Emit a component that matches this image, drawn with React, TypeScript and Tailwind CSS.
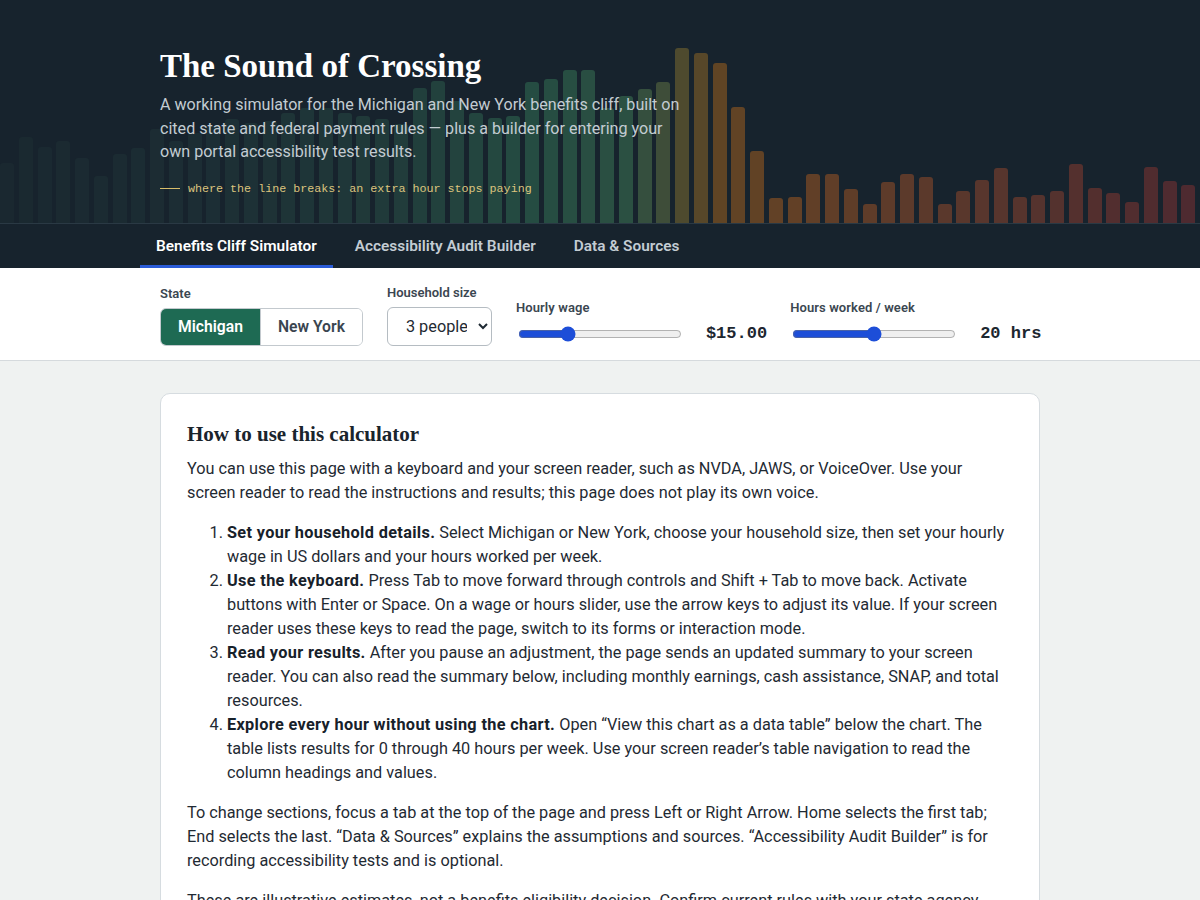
import { useState } from 'react'

// bar tops measured off the header art; bottom sits at y=222
const TOPS = [
  162, 136, 146, 140, 157, 175, 153, 147, 128, 140, 132, 125, 118, 122, 120, 112, 107, 107, 112, 115, 118, 123,
  87, 80, 100, 112, 117, 115, 81, 78, 69, 69, 107, 95, 88, 81, 47, 52, 62, 106, 150, 197, 196, 173, 173, 188, 203,
  181, 173, 176, 203, 190, 179, 167, 196, 194, 190, 163, 187, 192, 201, 166, 180, 184,
]

const KEYS: [number, number[]][] = [
  [0, [26, 40, 48]],
  [10, [28, 45, 52]],
  [20, [32, 58, 58]],
  [28, [37, 76, 66]],
  [33, [43, 80, 66]],
  [35, [62, 77, 57]],
  [36, [78, 74, 46]],
  [38, [96, 68, 36]],
  [42, [98, 64, 38]],
  [50, [90, 56, 44]],
  [63, [78, 42, 48]],
]

function barColor(i: number) {
  for (let k = 0; k < KEYS.length - 1; k++) {
    const [a, ca] = KEYS[k]
    const [b, cb] = KEYS[k + 1]
    if (i >= a && i <= b) {
      const t = (i - a) / (b - a)
      const c = ca.map((v, j) => Math.round(v + (cb[j] - v) * t))
      return `rgb(${c[0]}, ${c[1]}, ${c[2]})`
    }
  }
  return 'rgb(78, 42, 48)'
}

const TABS = ['Benefits Cliff Simulator', 'Accessibility Audit Builder', 'Data & Sources']

const sans = "font-['Roboto','Liberation_Sans',sans-serif]"
const serif = "font-['Liberation_Serif','Times_New_Roman',serif]"
const mono = "font-['Liberation_Mono','Courier_New',monospace]"
const lead = 'font-bold tracking-[0.34px] text-[#17212a]'

function HeaderArt() {
  return (
    <div aria-hidden="true" className="absolute inset-x-0 bottom-0 flex h-[180px] items-end">
      {TOPS.map((top, i) => (
        <div key={i} className="flex w-[18.75px] shrink-0 items-end">
          <div className="w-[14px] rounded-t-[3px]" style={{ height: 222 - top, backgroundColor: barColor(i) }} />
        </div>
      ))}
    </div>
  )
}

function Slider({
  label,
  value,
  min,
  max,
  step,
  onChange,
  display,
}: {
  label: string
  value: number
  min: number
  max: number
  step: number
  onChange: (v: number) => void
  display: string
}) {
  return (
    <div className="flex shrink-0 flex-col">
      <span className="mb-[6px] whitespace-nowrap text-[13px] font-semibold leading-4 tracking-[0.1px] text-[#3b4751]">
        {label}
      </span>
      <div className="flex h-6 items-center gap-6">
        <input
          type="range"
          min={min}
          max={max}
          step={step}
          value={value}
          onChange={(e) => onChange(Number(e.target.value))}
          aria-label={label}
          className="ml-[2px] w-[164px] shrink-0 accent-[#1d4ed8]"
        />
        <span className={`${mono} whitespace-nowrap text-[17px] font-bold text-[#1d2730]`}>{display}</span>
      </div>
    </div>
  )
}

export default function App() {
  const [tab, setTab] = useState(0)
  const [state, setState] = useState<'MI' | 'NY'>('MI')
  const [size, setSize] = useState('3')
  const [wage, setWage] = useState(15)
  const [hours, setHours] = useState(20)

  return (
    <div className={`${sans} min-h-screen bg-[#eff2f1] text-[#1f2a33]`}>
      <header className="relative overflow-hidden border-b border-[#2a3944] bg-[#17232d]">
        <HeaderArt />
        <div className="relative mx-auto w-[880px] pb-[25px] pt-[46px]">
          <h1 className={`${serif} text-[33px] font-semibold leading-10 text-white`}>The Sound of Crossing</h1>
          <p className="mt-[7px] max-w-[528px] text-[16.1px] leading-[23.5px] text-[#c3ccd2]">
            A working simulator for the Michigan and New York benefits cliff, built on cited state and federal payment
            rules — plus a builder for entering your own portal accessibility test results.
          </p>
          <p className={`${mono} mt-4 flex items-center text-[11.7px] leading-[18px] text-[#dcc47e]`}>
            <span className="mr-2 inline-block h-px w-5 bg-[#d8bd6a]" />
            where the line breaks: an extra hour stops paying
          </p>
        </div>
      </header>

      <nav className="bg-[#17232d]">
        <div role="tablist" className="mx-auto flex w-[880px]">
          <div className="-ml-5 flex gap-[6px]">
            {TABS.map((t, i) => (
              <button
                key={t}
                role="tab"
                aria-selected={tab === i}
                onClick={() => setTab(i)}
                className={`h-[44px] whitespace-nowrap border-b-[3px] px-4 pt-[5px] text-[15.4px] font-semibold ${
                  tab === i ? 'border-[#2a5bd7] text-white' : 'border-transparent text-[#c3ccd3]'
                }`}
              >
                {t}
              </button>
            ))}
          </div>
        </div>
      </nav>

      <section className="border-b border-[#d5dadd] bg-white">
        <div className="mx-auto flex w-[880px] items-end gap-6 pb-[14px] pt-[17px]">
          <div className="flex shrink-0 flex-col">
            <span className="mb-[6px] text-[13px] font-semibold leading-4 text-[#3b4751]">State</span>
            <div className="flex h-[38px] overflow-hidden rounded-md border border-[#c3c9ce]">
              <button
                onClick={() => setState('MI')}
                className={`whitespace-nowrap px-[17px] text-[15.7px] font-semibold ${
                  state === 'MI' ? 'bg-[#1e6a53] text-white' : 'bg-white text-[#3a4550]'
                }`}
              >
                Michigan
              </button>
              <button
                onClick={() => setState('NY')}
                className={`whitespace-nowrap border-l border-[#c3c9ce] px-[17px] text-[15.7px] font-semibold ${
                  state === 'NY' ? 'bg-[#1e6a53] text-white' : 'bg-white text-[#3a4550]'
                }`}
              >
                New York
              </button>
            </div>
          </div>

          <div className="flex shrink-0 flex-col">
            <span className="mb-[6px] whitespace-nowrap text-[13px] font-semibold leading-4 text-[#3b4751]">
              Household size
            </span>
            <select
              value={size}
              onChange={(e) => setSize(e.target.value)}
              className="h-[39px] w-[105px] rounded-md border border-[#b5bcc2] bg-white pl-[14px] pr-2 text-[16.3px] text-[#1f2a33]"
            >
              <option value="1">1 person</option>
              <option value="2">2 people</option>
              <option value="3">3 people</option>
              <option value="4">4 people</option>
              <option value="5">5 people</option>
            </select>
          </div>

          <Slider
            label="Hourly wage"
            value={wage}
            min={5}
            max={40}
            step={0.25}
            onChange={setWage}
            display={`$${wage.toFixed(2)}`}
          />
          <div className="-ml-px">
            <Slider
              label="Hours worked / week"
              value={hours}
              min={0}
              max={40}
              step={1}
              onChange={setHours}
              display={`${hours} hrs`}
            />
          </div>
        </div>
      </section>

      <main className="px-4 pb-10 pt-8">
        <article className="mx-auto w-[880px] rounded-[10px] border border-[#d6dce0] bg-white px-[26px] pb-6 pt-[26px] text-[16.3px] leading-6">
          <h2 className={`${serif} mb-[9px] text-[21px] font-semibold leading-7 text-[#1a242c]`}>
            How to use this calculator
          </h2>
          <p className="mb-4">
            You can use this page with a keyboard and your screen reader, such as NVDA, JAWS, or VoiceOver. Use your
            screen reader to read the instructions and results; this page does not play its own voice.
          </p>
          <ol className="mb-4 list-decimal pl-10">
            <li>
              <strong className={lead}>Set your household details.</strong> Select Michigan or New York, choose your
              household size, then set your hourly wage in US dollars and your hours worked per week.
            </li>
            <li>
              <strong className={lead}>Use the keyboard.</strong> Press Tab to move forward through controls and Shift +
              Tab to move back. Activate buttons with Enter or Space. On a wage or hours slider, use the arrow keys to
              adjust its value. If your screen reader uses these keys to read the page, switch to its forms or
              interaction mode.
            </li>
            <li>
              <strong className={lead}>Read your results.</strong> After you pause an adjustment, the page sends an
              updated summary to your screen reader. You can also read the summary below, including monthly earnings,
              cash assistance, SNAP, and total resources.
            </li>
            <li>
              <strong className={lead}>Explore every hour without using the chart.</strong> Open “View this chart as a
              data table” below the chart. The table lists results for 0 through 40 hours per week. Use your screen
              reader’s table navigation to read the column headings and values.
            </li>
          </ol>
          <p className="mb-4">
            To change sections, focus a tab at the top of the page and press Left or Right Arrow. Home selects the first
            tab; End selects the last. “Data &amp; Sources” explains the assumptions and sources. “Accessibility Audit
            Builder” is for recording accessibility tests and is optional.
          </p>
          <p>
            These are illustrative estimates, not a benefits eligibility decision. Confirm current rules with your state
            agency before making decisions about your work hours.
          </p>
        </article>
      </main>
    </div>
  )
}
